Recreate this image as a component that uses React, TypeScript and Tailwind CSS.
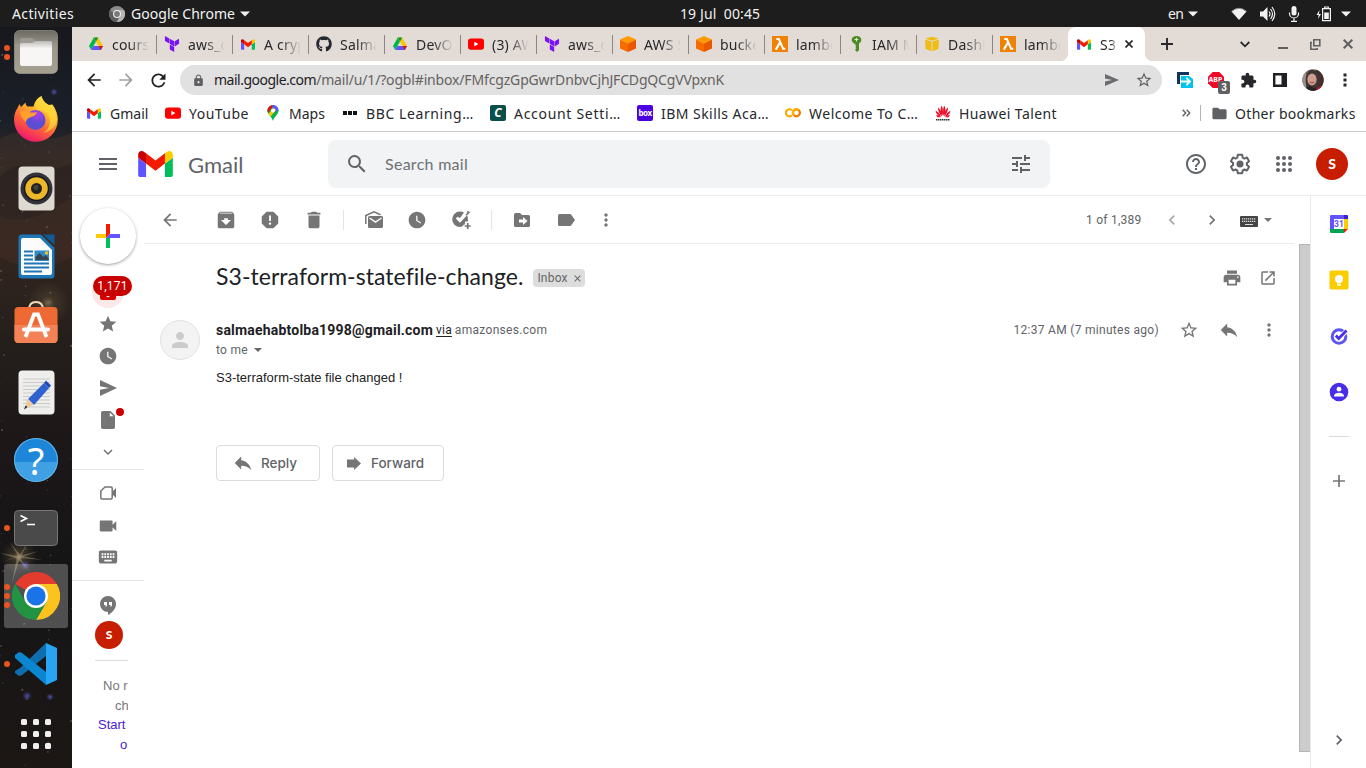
import React from "react";
import {
  MdArrowBack, MdArrowForward, MdRefresh, MdLock, MdStarBorder, MdExtension, MdMoreVert, MdFolder,
  MdMenu, MdSearch, MdTune, MdHelpOutline, MdArchive, MdReport, MdDelete,
  MdWatchLater, MdChevronLeft, MdChevronRight, MdKeyboard,
  MdPrint, MdOpenInNew, MdReply, MdStar, MdExpandMore, MdVideocam, MdClose, MdPerson,
} from "react-icons/md";
import { SiTerraform } from "react-icons/si";
import { FaGithub } from "react-icons/fa";

const UI = "font-['Noto_Sans',sans-serif]";

function T({ className = "", children }: { className?: string; children: React.ReactNode }) {
  return <span className={`inline-block whitespace-pre ${className}`}>{children}</span>;
}

function GmailMark({ w, h }: { w: number; h: number }) {
  return (
    <svg width={w} height={h} viewBox="52 42 88 66">
      <path fill="#6154ff" d="M58 108h14V74L52 59v43c0 3.32 2.69 6 6 6" />
      <path fill="#00bf5a" d="M120 108h14c3.32 0 6-2.69 6-6V59l-20 15" />
      <path fill="#fbcc00" d="M120 48v26l20-15v-8c0-7.42-8.47-11.65-14.4-7.2" />
      <path fill="#f21b00" d="M72 74V48l24 18 24-18v26L96 92" />
      <path fill="#c60000" d="M52 51v8l20 15V48l-5.6-4.2c-5.94-4.45-14.4-.22-14.4 7.2" />
    </svg>
  );
}

const DriveMark = () => (
  <svg width="16" height="16" viewBox="0 0 16 16">
    <path fill="#00b54b" d="M5.8 1.5 1 10l2.2 4L8 5.5z" />
    <path fill="#fbc800" d="M5.8 1.5h4.4L15 10h-4.4z" />
    <path fill="#6154ff" d="M5.4 10H15l-2.2 4H3.2z" />
    <path fill="#e3120b" d="M10.6 10H15l-2.2 4z" />
    <path fill="#0a8f3c" d="M5.8 1.5h4.4L8 5.5z" />
  </svg>
);
const YouTubeMark = () => (
  <svg width="16" height="16" viewBox="0 0 16 16"><rect y="2.4" width="16" height="11.4" rx="2.8" fill="#f00" /><path fill="#fff" d="M6.3 5.8v4.6L10.4 8.1z" /></svg>
);
const S3Mark = () => (
  <svg width="16" height="16" viewBox="0 0 16 16"><path fill="#ff9a00" d="m8 0 8 3.6L8 7.4 0 3.600z" /><path fill="#f66c00" d="M0 3.600 8 7.400V16l-8-3.600z" /><path fill="#e95700" d="m16 3.600-8 3.800V16l8-3.600z" /></svg>
);
const LambdaMark = () => (
  <svg width="16" height="16" viewBox="0 0 16 16"><rect width="16" height="16" fill="#ef8104" /><path fill="none" stroke="#fff" strokeWidth="2.100" d="M4.300 3h2.600l4.200 9.800h2.200M7.800 6.700 3.800 13.600" /></svg>
);
const IamMark = () => (
  <svg width="16" height="16" viewBox="0 0 16 16"><path fill="#4a8a22" d="M8.500 0c2.800 0 4.800 1.700 4.800 3.900 0 1.500-.9 2.700-2.300 3.400V14l-1.800 2-1.800-1.500V13l1-.8-1-1 1-1-1-.7V7.700h-1.400V7.300C5 6.600 3.700 5.300 3.700 3.900 3.700 1.700 5.700 0 8.500 0" /><path fill="#e3f2d5" d="M6.600 3h1.300V1.800h1.100V3h1.300v1.100H9v1.300H7.900V4.100H6.600z" /></svg>
);
const CubeMark = () => (
  <svg width="16" height="16" viewBox="0 0 16 16"><path fill="#f0bd14" d="m8 .8 6.800 1.900L8 4.700 1.200 2.700zM1 3.700l6.500 1.900V15.200L1.700 13zM15 3.700 8.500 5.600v9.600l5.800-2.200z" /></svg>
);

const tabs: { icon: React.ReactNode; label: string }[] = [
  { icon: <DriveMark />, label: "course" },
  { icon: <SiTerraform size={16} className="text-[#7b12f5]" />, label: "aws_cl" },
  { icon: <GmailMark w={14} h={11} />, label: "A crypto" },
  { icon: <FaGithub size={16} className="text-[#24292f]" />, label: "Salmae" },
  { icon: <DriveMark />, label: "DevOps" },
  { icon: <YouTubeMark />, label: "(3) AWS" },
  { icon: <SiTerraform size={16} className="text-[#7b12f5]" />, label: "aws_cl" },
  { icon: <S3Mark />, label: "AWS S3" },
  { icon: <S3Mark />, label: "bucket" },
  { icon: <LambdaMark />, label: "lambda" },
  { icon: <IamMark />, label: "IAM Ma" },
  { icon: <CubeMark />, label: "Dashbo" },
  { icon: <LambdaMark />, label: "lambda" },
];

const Caret = () => <svg width="10" height="6" viewBox="0 0 10 6"><path d="M0 .5h10L5 5.500z" fill="#f2f2f2" /></svg>;

function TopBar() {
  return (
    <div className={`flex h-[27px] shrink-0 items-center bg-[#1d1d1d] text-[14px] leading-[27px] text-[#f2f2f2] ${UI}`}>
      <div className="w-[109px] pl-3"><T className="tracking-[.37px]">Activities</T></div>
      <svg width="16" height="16" viewBox="0 0 16 16" className="mr-[6px]"><circle cx="8" cy="8" r="8" fill="#8c8c8c" /><path d="M8 8 1 4.500A8 8 0 0 0 7.500 16L11 9.800z" fill="#5e5e5e" /><path d="M8 4h7A8 8 0 0 1 8 16l3.500-6z" fill="#b5b5b5" /><circle cx="8" cy="8" r="4" fill="#eee" /><circle cx="8" cy="8" r="2.900" fill="#7a7a7a" /></svg>
      <div className="flex w-[549px] items-center gap-[5px]">
        <T className="tracking-[.05px]">Google Chrome</T>
        <Caret />
      </div>
      <div className="w-[488px] leading-[26px]"><T className="tracking-[.1px]">19 Jul  00:45</T></div>
      <div className="flex w-[62px] items-center gap-[5px]"><T className="tracking-[-.6px]">en</T><Caret /></div>
      <svg width="18" height="14" viewBox="0 0 18 14"><path d="M1.500 4.500Q9-2 16.500 4.500L9 13z" fill="#f2f2f2" /><path d="M1.500 4.500Q9-2 16.500 4.500" stroke="#8d8d8d" fill="none" /></svg>
      <svg width="18" height="16" viewBox="0 0 18 16" className="ml-[11px]"><path d="M1 5.500h3L8.500 1v14L4 10.500H1z" fill="#f2f2f2" /><path d="M10 5.500q2 2.500 0 5M11.500 3q4 5 0 10M13 1q5.500 7 0 14" stroke="#f2f2f2" strokeWidth="1.200" fill="none" /></svg>
      <svg width="12" height="16" viewBox="0 0 12 16" className="ml-[11px]"><rect x="3.500" y="0" width="5" height="9.500" rx="2.500" fill="#f2f2f2" /><path d="M1.500 6.500v1a4.500 4.500 0 0 0 9 0v-1M6 12v3M3 15.300h6" stroke="#f2f2f2" strokeWidth="1.200" fill="none" /></svg>
      <svg width="16" height="16" viewBox="0 0 16 16" className="ml-[16px]"><path d="M3.500 4 .5 9h2.200l-.7 4 3-5H2.900z" fill="#f2f2f2" /><path d="M6.600 2.600h7.800v12H6.600zM8.700 2.500V1h3.600v1.500" stroke="#f2f2f2" strokeWidth="1.200" fill="none" /><path d="M8.200 6.500h4.600V13H8.200z" fill="#f2f2f2" /></svg>
      <span className="ml-[9px]"><Caret /></span>
    </div>
  );
}

function Dots({ n }: { n: number }) {
  return (
    <div className="absolute top-0 bottom-0 left-[4px] flex flex-col items-center justify-center gap-[3px]">
      {Array.from({ length: n }).map((_, i) => <i key={i} className="size-[6px] rounded-full bg-[#e95420]" />)}
    </div>
  );
}

function DockItem({ dots = 0, active = false, children }: { dots?: number; active?: boolean; children: React.ReactNode }) {
  return (
    <div className="relative flex h-[68px] shrink-0 items-center justify-center">
      {active && <div className="absolute top-[2px] left-1 size-16 rounded-[3px] bg-white/25" />}
      {dots > 0 && <Dots n={dots} />}
      <div className="relative flex">{children}</div>
    </div>
  );
}

const stars = Array.from({ length: 150 }).map((_, i) => ({
  x: (i * 37.7 + (i % 7) * 11) % 72, y: (i * 91.3 + (i % 5) * 43) % 741, r: 0.4 + (i % 4) * 0.2, o: 0.15 + (i % 5) * 0.08,
}));

function Dock() {
  return (
    <div className="relative flex w-[72px] shrink-0 flex-col overflow-hidden bg-[#191a1d]">
      <svg className="absolute inset-0" width="72" height="741" viewBox="0 0 72 741">
        <defs>
          <linearGradient id="sky" x1="0" y1="0" x2="0" y2="1">
            <stop offset="0" stopColor="#17181d" /><stop offset=".13" stopColor="#1b2029" /><stop offset=".17" stopColor="#2c2423" />
            <stop offset=".3" stopColor="#33251f" /><stop offset=".42" stopColor="#251f1c" /><stop offset=".55" stopColor="#1d1718" />
            <stop offset=".75" stopColor="#151516" /><stop offset="1" stopColor="#1c1715" />
          </linearGradient>
          <radialGradient id="glow"><stop offset="0" stopColor="#c9b489" stopOpacity=".8" /><stop offset=".3" stopColor="#8c7850" stopOpacity=".35" /><stop offset="1" stopColor="#8c7850" stopOpacity="0" /></radialGradient>
          <radialGradient id="blue"><stop offset="0" stopColor="#6668c8" stopOpacity=".8" /><stop offset="1" stopColor="#3c3c9a" stopOpacity="0" /></radialGradient>
        </defs>
        <rect width="72" height="741" fill="url(#sky)" />
        <path d="M0 112q20-12 34-4t38-2v30q-22 10-40 4T0 150z" fill="#4a382e" opacity=".35" />
        <path d="M0 190q30 10 72-20v60q-40 20-72 0z" fill="#54382a" opacity=".25" />
        {stars.map((s, i) => <circle key={i} cx={s.x} cy={s.y} r={s.r} fill={i % 6 ? "#9a9290" : "#6a6cc0"} opacity={s.o} />)}
        <circle cx="48" cy="276" r="22" fill="url(#glow)" opacity=".6" />
        <circle cx="19" cy="530" r="18" fill="url(#glow)" opacity=".85" />
        <path d="M0 526l19 3 20-5-19 7L12 556l5-26L0 536l18-7-8-14 10 13 13-22-12 23 22 4-23-2 10 14-12-13z" fill="#d2bd96" opacity=".35" />
        <circle cx="27" cy="669" r="5" fill="url(#blue)" /><circle cx="50" cy="670" r="4" fill="url(#blue)" /><circle cx="54" cy="65" r="4" fill="url(#blue)" /><circle cx="25" cy="538" r="5" fill="url(#blue)" />
      </svg>
      <div className="relative -mt-[9px] flex flex-col">
        <DockItem dots={2}>
          <svg width="44" height="44" viewBox="0 0 44 44"><defs><linearGradient id="fg" x1="0" y1="0" x2="0" y2="1"><stop offset="0" stopColor="#6b6961" /><stop offset=".35" stopColor="#9b978a" /><stop offset="1" stopColor="#a5a08f" /></linearGradient><linearGradient id="ff" x1="0" y1="0" x2="0" y2="1"><stop offset="0" stopColor="#bcbab7" /><stop offset=".3" stopColor="#f7f6f5" /></linearGradient></defs><rect x=".5" y=".5" width="43" height="43" rx="5" fill="url(#fg)" stroke="#b5b1a3" strokeOpacity=".5" /><path d="M6 10q0-2 2-2h9q2 0 3 1.500t3 1.500h13q2 0 2 2v4H6z" fill="#9c9a93" /><path d="M6 15q0-2 2-2h9q2 0 3-1t3-1h13q2 0 2 2v21q0 2-2 2H8q-2 0-2-2z" fill="url(#ff)" /></svg>
        </DockItem>
        <DockItem>
          <svg width="46" height="48" viewBox="0 0 46 48" className="-mt-[3px]"><defs><linearGradient id="fx" x1=".8" y1="0" x2=".3" y2="1"><stop offset="0" stopColor="#fff44f" /><stop offset=".35" stopColor="#ffb52b" /><stop offset=".6" stopColor="#ff6a35" /><stop offset="1" stopColor="#f0136f" /></linearGradient><radialGradient id="fp" cx=".6" cy=".2"><stop offset="0" stopColor="#b43be8" /><stop offset="1" stopColor="#5a4fd0" /></radialGradient></defs><path d="M28.500 1q1 5 7 9l4-.5q5 7 5.300 15A21.800 22 0 0 1 1 25q0-7 3.500-12l2-4 1.500 3 4.500-4.500q0 3 2 4l6 0Q22 4 28.500 1" fill="url(#fx)" /><circle cx="22.500" cy="25" r="10" fill="url(#fp)" /><path d="M7 17q6-3 9 0 4 1 8 0-1 4-6 5-5 2-5 5-5-4-6-10" fill="#ffa02c" /><path d="M24 15q12 0 13 11 0 8-7 12 12-3 14-13Q42 14 36 10q-8-3-7.500-9-8 5-4.500 14" fill="#ffd83b" opacity=".75" /></svg>
        </DockItem>
        <DockItem>
          <svg width="37" height="45" viewBox="0 0 37 45"><rect x=".5" y=".5" width="36" height="44" rx="4" fill="#dedad0" /><circle cx="18.500" cy="22.500" r="16" fill="#32323a" /><circle cx="18.500" cy="22.500" r="12" fill="#edb72a" stroke="#17171c" strokeWidth="1.500" /><circle cx="18.500" cy="22.500" r="5.500" fill="#222" /><circle cx="18" cy="21.500" r="2.500" fill="#444" /></svg>
        </DockItem>
        <DockItem>
          <svg width="37" height="45" viewBox="0 0 37 45"><path d="M4 .5h19L36.500 14v27q0 3.500-3.500 3.500H4q-3.500 0-3.500-3.500V4Q.5.5 4 .5" fill="#1d77b5" /><path d="M25 .5h11.500V11z" fill="#115a94" /><path d="M5 4h17l12 12v23q0 2-2 2H5q-2 0-2-2V6q0-2 2-2" fill="#fbfbfb" /><path d="M6 17.500h9M6 21.500h9M6 25.500h9M6 29.500h25M6 33.500h25M6 37.500h18" stroke="#1d77b5" strokeWidth="1.800" /><path d="M16.500 16.500H31V27H16.500z" fill="#2c8bc9" /><path d="M17.500 26v-3l4-4 4 4 2-2 3 3v2z" fill="#38454f" /><circle cx="28.500" cy="19" r="1.800" fill="#f2c12e" /></svg>
        </DockItem>
        <DockItem>
          <svg width="44" height="44" viewBox="0 0 44 44" className="-mt-1"><path d="M15 10q0-8 7-8t7 8" fill="none" stroke="#f3d9b3" strokeWidth="2" /><rect x=".5" y="7" width="43" height="36" rx="4" fill="#ee6a35" /><path d="M.5 25h43v14q0 4-4 4h-35q-4 0-4-4z" fill="#f38356" /><path d="M11.500 37 20 14.500h4L32.500 37" fill="none" stroke="#fff" strokeWidth="3.800" /><path d="M10 29.500h24" stroke="#fff" strokeWidth="4" strokeLinecap="round" /></svg>
        </DockItem>
        <DockItem>
          <svg width="37" height="45" viewBox="0 0 37 45"><rect x=".5" y=".5" width="36" height="44" rx="4" fill="#eeeeec" /><path d="M5 9h27M5 12.500h27M5 16h27M5 19.500h27M5 23h27M5 26.500h27M5 30h27M5 33.500h27M5 37h27" stroke="#c9c9c9" /><path d="m26 13 5 5-15 17-6-6z" fill="#2f62d0" /><path d="m28 10.500 5 5-2 2.500-5-5z" fill="#1f4bb0" /><path d="m9.500 28.500 6 6-9 5z" fill="#eec99e" /><path d="m7.700 35.500 1.800 1.500-3.500 2.500z" fill="#222" /></svg>
        </DockItem>
        <DockItem>
          <div className="flex size-11 items-center justify-center rounded-full bg-[linear-gradient(#1d86d8_55%,#3fa0e4_55%)] font-['Noto_Sans',sans-serif] text-[38px] leading-none text-white ring-1 ring-[#64b1e6] ring-inset">?</div>
        </DockItem>
        <DockItem dots={1}>
          <svg width="44" height="36" viewBox="0 0 44 36"><rect x=".5" y=".5" width="43" height="35" rx="4" fill="#4a4a4a" stroke="#777" /><path d="m6.500 5.500 6 3-6 3M13 14.500h8" stroke="#fff" strokeWidth="1.600" fill="none" /></svg>
        </DockItem>
        <DockItem dots={3} active>
          <svg width="48" height="48" viewBox="0 0 48 48"><path d="M24 24 3.200 12A24 24 0 0 1 44.800 12z" fill="#e33b2e" /><path d="M24 12h20.800A24 24 0 0 1 24 48l10.400-18z" fill="#fcc31e" /><path d="M3.200 12A24 24 0 0 0 24 48l10.400-18H13.600z" fill="#229342" /><circle cx="24" cy="24" r="12" fill="#fff" /><circle cx="24" cy="24" r="9.600" fill="#1a73e8" /></svg>
        </DockItem>
        <DockItem dots={1}>
          <svg width="42" height="42" viewBox="0 0 42 42"><path d="M31 0 5 25l-5 3 0 2 4 3 3-1L31 13z" fill="#0f6ead" /><path d="M4 9 0 12v3l31 27V29L7 10z" fill="#0b86d0" /><path d="M31 0 42 5v32l-11 5z" fill="#27a5f2" /></svg>
        </DockItem>
        <DockItem>
          <div className="mt-[3px] grid grid-cols-3 gap-[6px]">
            {Array.from({ length: 9 }).map((_, i) => <i key={i} className="size-[6px] rounded-[1.5px] bg-[#efefef]" />)}
          </div>
        </DockItem>
      </div>
    </div>
  );
}

function TabStrip() {
  return (
    <div className={`flex h-[34px] shrink-0 bg-[#e3dbd6] pl-2 text-[14px] tracking-[.2px] text-[#26282b] ${UI}`}>
      {tabs.map((t, i) => (
        <div key={i} className="relative flex w-[76px] shrink-0 items-center pl-2">
          {i > 0 && <i className="absolute top-2 left-0 h-[19px] w-px bg-[#8b8785]" />}
          <span className="flex w-4 shrink-0 items-center justify-center">{t.icon}</span>
          <span className="ml-2 w-[37px] overflow-hidden whitespace-nowrap [mask-image:linear-gradient(90deg,#000_45%,transparent)]">{t.label}</span>
        </div>
      ))}
      <div className="relative flex w-[77px] shrink-0 items-center rounded-t-lg bg-white pl-2">
        <i className="absolute bottom-0 -left-2 size-2 bg-[radial-gradient(circle_at_0_0,transparent_8px,white_8.5px)]" />
        <i className="absolute -right-2 bottom-0 size-2 bg-[radial-gradient(circle_at_100%_0,transparent_8px,white_8.5px)]" />
        <span className="flex w-4 justify-center"><GmailMark w={14} h={11} /></span>
        <span className="ml-2 w-[17px] overflow-hidden whitespace-nowrap [mask-image:linear-gradient(90deg,#000_65%,transparent)]">S3-te</span>
        <svg width="8" height="8" viewBox="0 0 8 8" className="ml-[8px]"><path d="m.5.5 7 7m0-7-7 7" stroke="#26282b" strokeWidth="1.700" /></svg>
      </div>
      <div className="flex flex-1 items-center">
        <svg width="12" height="12" viewBox="0 0 12 12" className="ml-4"><path d="M6 0v12M0 6h12" stroke="#26282b" strokeWidth="1.900" /></svg>
        <svg width="10" height="7" viewBox="0 0 10 7" className="ml-[67px]"><path d="m.7 1 4.300 4.300L9.300 1" stroke="#26282b" strokeWidth="1.800" fill="none" /></svg>
        <svg width="10" height="10" viewBox="0 0 10 10" className="ml-[28px]"><path d="M0 9h10" stroke="#5f6063" strokeWidth="2" /></svg>
        <svg width="11" height="11" viewBox="0 0 11 11" className="ml-[22px]"><path d="M3.800.8h6v6h-6zM2 3.500H.8v6.700h6.400V9" stroke="#5f6063" strokeWidth="1.600" fill="none" /></svg>
        <svg width="10" height="10" viewBox="0 0 10 10" className="ml-[22px]"><path d="m.7.7 8.600 8.600m0-8.600L.7 9.300" stroke="#5f6063" strokeWidth="2" /></svg>
      </div>
    </div>
  );
}

function AddressBar() {
  return (
    <div className={`flex h-[37px] shrink-0 items-center pt-px text-[14px] ${UI}`}>
      <MdArrowBack size={20} className="ml-3 text-[#1f2023]" />
      <MdArrowForward size={20} className="ml-3 text-[#a1a1a1]" />
      <MdRefresh size={21} className="ml-3 text-[#1f2023]" />
      <div className="ml-[11px] flex h-[30px] w-[982px] items-center rounded-full bg-[#e1e1e1] pl-3">
        <MdLock size={13} className="text-[#5f6063]" />
        <div className="ml-[9px] w-[891px] pb-[2px] whitespace-nowrap">
          <T className="tracking-[-.5px] text-[#1f2023]">mail.google.com</T><T className="tracking-[-.16px] text-[#66625f]">/mail/u/1/?ogbl#inbox/FMfcgzGpGwrDnbvCjhJFCDgQCgVVpxnK</T>
        </div>
        <svg width="14" height="12" viewBox="0 0 14 12"><path d="M0 0 14 6 0 12V7.500L7 6 0 4.500z" fill="#6a6b6e" /></svg>
        <MdStarBorder size={18} className="ml-[16px] text-[#5f6063]" />
      </div>
      <svg width="16" height="16" viewBox="0 0 16 16" className="ml-[15px]"><path d="M0 0h12v3H3v9H0z" fill="#16325f" /><path d="M4 4h8l4 3v9H4z" fill="#00c4ee" /><path d="M3.500 9.500h9M9.500 6l3.500 3.500L9.500 13" stroke="#fff" strokeWidth="1.800" fill="none" /></svg>
      <div className="relative ml-[15px] size-4">
        <svg width="16" height="16" viewBox="0 0 16 16"><path d="M4.700 0h6.600L16 4.700v6.600L11.300 16H4.700L0 11.300V4.700z" fill="#ee0a27" /></svg>
        <span className="absolute top-[4px] left-[.5px] text-[7px] leading-[8px] font-bold text-white">ABP</span>
        <span className="absolute top-[9px] left-[10px] flex h-[13px] w-3 items-center justify-center rounded-[2px] bg-[#5f6063] font-['Liberation_Sans',sans-serif] text-[10px] font-bold text-white">3</span>
      </div>
      <MdExtension size={17} className="ml-4 text-[#26282b]" />
      <svg width="14" height="14" viewBox="0 0 14 14" className="ml-[16px]"><path d="M1.200 1.200h11.600v11.600H1.200z" fill="none" stroke="#1f2023" strokeWidth="2.400" /><path d="M8.500 0H14v14H8.500z" fill="#1f2023" /></svg>
      <svg width="22" height="22" viewBox="0 0 22 22" className="ml-[15px]"><defs><clipPath id="pc"><circle cx="11" cy="11" r="10.700" /></clipPath></defs><g clipPath="url(#pc)"><rect width="22" height="22" fill="#7b6258" /><path d="M14 0h8v22h-8z" fill="#4b2c2a" /><path d="M0 0h4v22H0z" fill="#9a8f8a" /><path d="M11 1q7 1 6.500 10T13 22H6Q2 12 4.500 6T11 1" fill="#3d3838" /><ellipse cx="10" cy="10.500" rx="4.600" ry="6" fill="#cf9f8d" /><path d="M7.500 13q2.500 2 5 0" stroke="#a3474b" fill="none" /><path d="M3 22q1-5 5-5l4 2 6-1 3 4z" fill="#2a2325" /><path d="M14 19l5-2 2 5h-6z" fill="#b6142c" /></g></svg>
      <svg width="4" height="14" viewBox="0 0 4 14" className="ml-[19px]"><path d="M.5.500h3v3h-3zM.5 5.500h3v3h-3zM.5 10.500h3v3h-3z" fill="#26282b" /></svg>
    </div>
  );
}

function Bookmarks() {
  return (
    <div className={`flex h-[34px] shrink-0 items-center border-b border-[#c8c8c8] pb-[3px] pl-[14px] text-[14px] text-[#26282b] ${UI}`}>
      <div className="flex w-[79px] items-center gap-2"><span className="flex w-4 justify-center"><GmailMark w={14} h={11} /></span><T>Gmail</T></div>
      <div className="flex w-[100px] items-center gap-2"><YouTubeMark /><T className="tracking-[.48px]">YouTube</T></div>
      <div className="flex w-[77px] items-center gap-2">
        <svg width="16" height="16" viewBox="0 0 16 16"><defs><clipPath id="pin"><path d="M8 0a5.600 5.600 0 0 1 5.600 5.600C13.600 9.500 9.500 11 8 16 6.500 11 2.400 9.500 2.400 5.600A5.600 5.600 0 0 1 8 0" /></clipPath></defs><g clipPath="url(#pin)"><rect width="16" height="16" fill="#00b54b" /><path d="M0 0h9L2 9H0z" fill="#e3120b" /><path d="M7 0h9v3L9 8z" fill="#6154ff" /><path d="m2 10 7-7 2 2-6.500 8z" fill="#fbc800" /></g><circle cx="8" cy="5.600" r="2" fill="#fff" /></svg>
        <T>Maps</T>
      </div>
      <div className="flex w-[148px] items-center gap-2"><svg width="16" height="16" viewBox="0 0 16 16"><path d="M1 6h4v4H1zM6 6h4v4H6zM11 6h4v4h-4z" fill="#111" /></svg><T className="tracking-[.6px]">BBC Learning…</T></div>
      <div className="flex w-[147px] items-center gap-2"><span className="flex size-4 items-center justify-center rounded-[2px] bg-[#0b4f4a] text-[12px] font-bold text-white italic">C</span><T className="tracking-[.7px]">Account Setti…</T></div>
      <div className="flex w-[148px] items-center gap-2"><span className="flex size-4 items-center justify-center rounded-[2px] bg-[#4a00e0] pb-px text-[8px] font-bold tracking-[-.5px] text-white">box</span><T className="tracking-[.46px]">IBM Skills Aca…</T></div>
      <div className="flex w-[150px] items-center gap-2"><svg width="16" height="16" viewBox="0 0 16 16" fill="none" strokeWidth="2.200"><path d="M6.800 5.200a3.500 3.500 0 1 0 0 5.200" stroke="#f8ab00" /><circle cx="11.400" cy="7.800" r="3.500" stroke="#ee7a00" /><path d="M8.900 10.300a3.500 3.500 0 0 1 5-5" stroke="#fbb400" /></svg><T className="tracking-[.5px]">Welcome To C…</T></div>
      <div className="flex w-[245px] items-center gap-2">
        <svg width="16" height="16" viewBox="0 0 16 16"><path fill="#e8102c" d="M7.700 11Q4 5 6.800.5 8.500 4 7.700 11M8.300 11Q12 5 9.200.5 7.500 4 8.300 11M7 11.400Q3 8 3 2.500 6.500 5 7 11.400M9 11.400Q13 8 13 2.500 9.500 5 9 11.400M6.200 11.800Q1 10 .5 5.500 4.500 7.500 6.200 11.800M9.800 11.800Q15 10 15.500 5.500 11.500 7.500 9.800 11.800M5.800 12.300H2.300L1 10q3 0 4.800 2.300M10.200 12.300h3.500L15 10q-3 0-4.800 2.300" /><path d="M1 14.700h14" stroke="#333" strokeWidth="1.600" strokeDasharray="1.500 .5" /></svg>
        <T className="tracking-[.4px]">Huawei Talent</T>
      </div>
      <svg width="9" height="8" viewBox="0 0 9 8" className="ml-[2px]"><path d="m.7.7 3 3.300-3 3.300M4.700.7l3 3.300-3 3.300" stroke="#5f6063" strokeWidth="1.400" fill="none" /></svg>
      <i className="ml-[9px] h-4 w-px bg-[#b5b5b5]" />
      <MdFolder size={17} className="mr-[7px] ml-[10px] text-[#5f6063]" />
      <T className="tracking-[.32px]">Other bookmarks</T>
    </div>
  );
}

function Header() {
  return (
    <div className="flex h-16 shrink-0 items-center border-b border-[#ebebeb]">
      <MdMenu size={24} className="ml-6 text-[#5f6368]" />
      <div className="ml-[18px] flex w-[190px] items-center">
        <GmailMark w={35} h={26} />
        <T className="ml-[15px] pt-px font-['Lato',sans-serif] text-[22px] text-[#5f6368]">Gmail</T>
      </div>
      <div className="flex h-12 w-[722px] items-center rounded-lg bg-[#f1f3f4]">
        <MdSearch size={24} className="ml-[17px] text-[#5f6368]" />
        <T className="ml-4 w-[624px] font-['Lato',sans-serif] text-[16px] tracking-[.28px] text-[#6c7075]">Search mail</T>
        <MdTune size={24} className="text-[#5f6368]" />
      </div>
      <MdHelpOutline size={24} className="ml-[134px] text-[#5f6368]" />
      <svg width="24" height="24" viewBox="0 0 24 24" className="ml-5 text-[#5f6368]"><path fill="currentColor" d="M13.850 22.250h-3.700c-.74 0-1.360-.54-1.450-1.270l-.27-1.890c-.27-.14-.53-.29-.79-.46l-1.800.72c-.7.26-1.470-.03-1.810-.65L2.200 15.530c-.35-.66-.2-1.440.36-1.880l1.530-1.190c-.01-.15-.02-.3-.02-.46 0-.15.010-.31.020-.46l-1.520-1.190c-.59-.45-.74-1.260-.37-1.880l1.850-3.190c.34-.62 1.110-.9 1.790-.63l1.810.73c.26-.17.52-.32.78-.46l.27-1.910c.09-.7.71-1.250 1.440-1.250h3.700c.74 0 1.360.54 1.450 1.270l.27 1.890c.27.14.53.29.79.46l1.800-.72c.71-.26 1.480.03 1.820.65l1.840 3.180c.36.66.2 1.440-.36 1.880l-1.520 1.190c.01.15.02.3.02.46s-.01.31-.02.46l1.520 1.190c.56.45.72 1.230.37 1.860l-1.860 3.220c-.34.62-1.110.9-1.800.63l-1.800-.72c-.26.17-.52.32-.78.46l-.27 1.910c-.1.680-.72 1.220-1.460 1.220zm-3.230-2h2.760l.37-2.550.53-.22c.44-.18.88-.44 1.340-.78l.45-.34 2.380.96 1.380-2.400-2.030-1.580.07-.56c.03-.26.06-.51.06-.78s-.03-.53-.06-.78l-.07-.56 2.030-1.580-1.390-2.400-2.390.96-.45-.35c-.42-.32-.87-.58-1.330-.77l-.52-.22-.37-2.550h-2.760l-.37 2.550-.53.21c-.44.19-.88.44-1.340.79l-.45.33-2.380-.95-1.390 2.390 2.030 1.580-.07.56a7 7 0 0 0-.06.79c0 .26.020.53.060.78l.07.56-2.030 1.580 1.380 2.400 2.390-.96.45.35c.43.33.86.58 1.330.77l.53.22z" /><circle cx="12" cy="12" r="3.500" fill="currentColor" /></svg>
      <svg width="16" height="16" viewBox="0 0 16 16" className="ml-6" fill="#5f6368">{[2, 8, 14].map((y) => [2, 8, 14].map((x) => <circle key={`${x}-${y}`} cx={x} cy={y} r="2" />))}</svg>
      <div className="ml-6 flex size-8 items-center justify-center rounded-full bg-[#c71d00] font-['Lato',sans-serif] text-[14px] font-black text-white">S</div>
    </div>
  );
}

function NavCell({ children }: { children: React.ReactNode }) {
  return <div className="relative flex h-8 shrink-0 items-center justify-center">{children}</div>;
}

function SideNav() {
  return (
    <div className="flex w-[72px] shrink-0 flex-col text-[#757575]">
      <div className="mt-3 mb-3 ml-2 flex size-14 shrink-0 items-center justify-center rounded-full bg-white shadow-[0_1px_2px_0_rgba(60,64,67,.3),0_1px_3px_1px_rgba(60,64,67,.15)]">
        <svg width="24" height="24" viewBox="0 0 24 24"><path d="M10 0h4v10l-4 4z" fill="#f21b00" /><path d="M0 10h10v4H0z" fill="#fbcc00" /><path d="M14 10h10v4H10z" fill="#6154ff" /><path d="M10 14h4v10h-4z" fill="#00bf5a" /></svg>
      </div>
      <NavCell>
        <i className="size-8 rounded-full bg-[#fce8e6]" />
        <span className="absolute top-[16px] flex h-2 w-4 justify-center rounded-b-[2px] bg-[#d50000]" />
        <span className="absolute top-0 left-[21px] flex h-5 w-[39px] items-center justify-center rounded-full bg-[#c80000] font-['Roboto',sans-serif] text-[12px] tracking-[.2px] text-white">1,171</span>
        <svg className="absolute top-[20px]" width="4" height="2" viewBox="0 0 4 2"><path d="M0 0h4L2 1.500z" fill="#fff" /></svg>
      </NavCell>
      <NavCell><MdStar size={20} /></NavCell>
      <NavCell><MdWatchLater size={20} /></NavCell>
      <NavCell><svg width="17" height="16" viewBox="0 0 17 16"><path d="M0 0 17 8 0 16V9.800L9 8 0 6.200z" fill="currentColor" /></svg></NavCell>
      <NavCell>
        <svg width="14" height="18" viewBox="0 0 14 18"><path d="M2 0h7.500L14 4.500V16q0 2-2 2H2q-2 0-2-2V2q0-2 2-2" fill="currentColor" /><path d="M8.800 1.500V5.300h3.800z" fill="#fff" /></svg>
        <i className="absolute top-1 left-11 size-2 rounded-full bg-[#c80000]" />
      </NavCell>
      <NavCell><MdExpandMore size={18} /></NavCell>
      <div className="mt-px h-px shrink-0 bg-[#e4e4e4]" />
      <div className="my-[7px] flex flex-col">
        <NavCell><svg width="17" height="14" viewBox="0 0 17 14"><path d="M5 1h6q1.200 0 1.200 1.200v9.600Q12.200 13 11 13H2Q.8 13 .8 11.800V5z" fill="none" stroke="currentColor" strokeWidth="1.500" /><path d="M12 6l4-4v10l-4-4z" fill="currentColor" /></svg></NavCell>
        <NavCell><MdVideocam size={22} className="mt-px" /></NavCell>
        <NavCell><MdKeyboard size={22} /></NavCell>
      </div>
      <div className="h-px shrink-0 bg-[#e4e4e4]" />
      <svg width="16" height="19" viewBox="0 0 16 19" className="mt-[15px] ml-7 shrink-0"><path d="M8 0a8 8 0 0 1 8 8c0 4.800-4 9-8 11v-3A8 8 0 0 1 8 0" fill="currentColor" /><path d="M4 6h3v3q0 1.500-1.500 2V9H4zM9 6h3v3q0 1.500-1.500 2V9H9z" fill="#fff" /></svg>
      <div className="mt-[6px] ml-[23px] flex size-7 shrink-0 items-center justify-center rounded-full bg-[#c71d00] font-['Lato',sans-serif] text-[12px] font-black text-white">S</div>
      <div className="mt-[11px] ml-[23px] w-[33px] overflow-hidden border-t border-[#dadce0] pt-[15px] font-['Liberation_Sans',sans-serif] text-[13px] leading-[19.5px] whitespace-nowrap">
        <div className="pl-[8px] text-[#777]">No recent</div>
        <div className="pl-[20px] text-[#777]">chats</div>
        <div className="pl-[3px] text-[#4b1bd0]">Start a new</div>
        <div className="pl-[25px] text-[#4b1bd0]">one</div>
      </div>
    </div>
  );
}

function Cell({ children }: { children: React.ReactNode }) {
  return <div className="flex w-11 shrink-0 justify-center">{children}</div>;
}

function MailToolbar() {
  return (
    <div className="mr-4 flex h-12 shrink-0 items-center border-b border-[#ebebeb] text-[#757575]">
      <div className="flex w-[60px] pl-4"><MdArrowBack size={20} /></div>
      <Cell><MdArchive size={22} /></Cell>
      <Cell><MdReport size={22} /></Cell>
      <Cell><MdDelete size={22} /></Cell>
      <i className="mx-[7px] h-5 w-px bg-[#e4e4e4]" />
      <Cell><svg width="18" height="17" viewBox="0 0 18 17" className="ml-px"><path d="M.8 13V4.500L9 .8l6.500 3" fill="none" stroke="currentColor" strokeWidth="1.500" /><path d="M4 5h12.500Q18 5 18 6.500v9q0 1.500-1.500 1.500h-12Q3 17 3 15.500v-9Q3 5 4.500 5" fill="currentColor" /><path d="m4.500 7 6 4 6-4" fill="none" stroke="#fff" strokeWidth="1.500" /></svg></Cell>
      <Cell><MdWatchLater size={20} /></Cell>
      <Cell><svg width="19" height="18" viewBox="0 0 19 18" className="ml-px"><path d="M8 .5a8 8 0 0 1 4 1.100L8 7 5.500 5.800 3.800 7.500 8 11.800l7-7.500q.9 1.500.9 4.200v2h-3v3h-1q-1.700 2.500-4 2.500a7.700 7.700 0 0 1 .1-15.500" fill="currentColor" /><path d="m15 .8 2 .5-3 3" stroke="currentColor" fill="none" strokeWidth="1.500" /><path d="M15.700 12v6M12.700 15h6" stroke="currentColor" strokeWidth="1.700" /></svg></Cell>
      <i className="mx-2 h-5 w-px bg-[#e4e4e4]" />
      <Cell><svg width="16" height="14" viewBox="0 0 16 14" className="mt-px"><path d="M1.500 0H6l2 2h6.500Q16 2 16 3.500v9q0 1.500-1.500 1.500h-13Q0 14 0 12.500v-11Q0 0 1.500 0" fill="currentColor" /><path d="M5 6.500h4V4l4.500 4L9 12V9.500H5z" fill="#fff" /></svg></Cell>
      <Cell><svg width="17" height="12" viewBox="0 0 17 12"><path d="M1.500 0H12q.8 0 1.300.7L17 6l-3.700 5.300q-.5.700-1.300.7H1.500Q0 12 0 10.500v-9Q0 0 1.500 0" fill="currentColor" /></svg></Cell>
      <div className="ml-[8px]"><MdMoreVert size={20} /></div>
      <T className="ml-[470px] w-[76px] font-['Roboto',sans-serif] text-[12px] tracking-[.25px] text-[#5f6368]">1 of 1,389</T>
      <MdChevronLeft size={20} className="text-[#a8a8a8]" />
      <MdChevronRight size={20} className="ml-5" />
      <svg width="18" height="11" viewBox="0 0 18 11" className="mt-[3px] ml-[18px]"><rect width="18" height="11" rx="1" fill="#444" /><path d="M2 2.800h14M2 5.300h14" stroke="#ddd" strokeWidth="1.300" strokeDasharray="1.300 .7" /><path d="M5 8.500h8" stroke="#ddd" /></svg>
      <svg width="8" height="4" viewBox="0 0 8 4" className="ml-[6px]"><path d="M0 0h8L4 4z" fill="#757575" /></svg>
    </div>
  );
}

function Message() {
  return (
    <div className="flex min-h-0 flex-1">
      <div className="flex flex-1 flex-col pr-[22px] pl-4 text-[#757575]">
        <div className="mt-[14px] flex h-10 items-center pl-14">
          <T className="pb-[3px] font-['Lato',sans-serif] text-[23px] tracking-[.05px] text-[#202124]">S3-terraform-statefile-change.</T>
          <div className="ml-[10px] flex h-[18px] w-[52px] items-center rounded bg-[#ddd] pl-1 text-[#666]">
            <T className="font-['Roboto',sans-serif] text-[12px] tracking-[.2px]">Inbox</T>
            <MdClose size={11} className="ml-1" />
          </div>
          <span className="flex-1" />
          <MdPrint size={20} />
          <MdOpenInNew size={18} className="ml-[17px]" />
        </div>
        <div className="mt-[22px] flex">
          <div className="flex size-10 items-center justify-center rounded-full border border-[#e0e0e0] bg-[#f3f3f3]"><MdPerson size={24} className="text-[#cbcbcb]" /></div>
          <div className="ml-4 flex flex-1 flex-col font-['Roboto',sans-serif]">
            <div className="flex h-5 items-center">
              <T className="text-[14px] font-bold tracking-[.2px] text-[#202124]">salmaehabtolba1998@gmail.com</T>
              <T className="ml-[3px] text-[12px] tracking-[.2px] text-[#222] underline underline-offset-2">via</T>
              <T className="ml-[3px] text-[12px] tracking-[.3px] text-[#5f6368]">amazonses.com</T>
              <span className="flex-1" />
              <T className="mr-[20px] text-[12px] tracking-[.3px] text-[#5f6368]">12:37 AM (7 minutes ago)</T>
              <MdStarBorder size={20} />
              <MdReply size={22} className="ml-[19px]" />
              <MdMoreVert size={20} className="mr-[-2px] ml-[19px]" />
            </div>
            <div className="flex h-5 items-center"><T className="text-[12px] tracking-[.25px] text-[#5f6368]">to me</T><svg width="8" height="4" viewBox="0 0 8 4" className="ml-[6px]"><path d="M0 0h8L4 4z" fill="#666" /></svg></div>
            <T className="mt-2 font-['Liberation_Sans',sans-serif] text-[13px] leading-5 text-[#222]">S3-terraform-state file changed !</T>
            <div className="mt-[57px] flex gap-3 font-['Inter',sans-serif] text-[13.5px] font-medium text-[#5f6368]">
              <div className="flex h-9 w-[104px] items-center rounded border border-[#dadce0] pl-[15px]"><MdReply size={22} className="text-[#757575]" /><T className="ml-[7px]">Reply</T></div>
              <div className="flex h-9 w-[112px] items-center rounded border border-[#dadce0] pl-[14px]"><svg width="14" height="13" viewBox="0 0 14 13"><path d="M0 2.500h7V0l7 6.500L7 13v-2.500H0z" fill="#757575" /></svg><T className="ml-[10px]">Forward</T></div>
            </div>
          </div>
        </div>
      </div>
      <div className="mb-4 w-[11px] border-y border-l border-[#b4b4b4] bg-[#ccc]" />
    </div>
  );
}

function SidePanel() {
  return (
    <div className="flex w-14 shrink-0 flex-col items-center border-l border-[#ebebeb] pl-px">
      <svg width="20" height="20" viewBox="0 0 20 20" className="mt-[18px]"><path d="M2 1h13v4H5v10H1V2q0-1 1-1" fill="#6154ff" /><path d="M15 1h3q1 0 1 1v3h-4z" fill="#3d1be0" /><path d="M15 5h4v10h-4z" fill="#fbcc00" /><path d="M1 15h14v4H2q-1 0-1-1z" fill="#00a54f" /><path d="M15 15h4l-4 4z" fill="#f21b00" /><path d="M5 5h10v10H5z" fill="#fff" /><text x="10" y="13.200" textAnchor="middle" fontSize="8.500" fontWeight="bold" fontFamily="Roboto" fill="#6154ff">31</text></svg>
      <svg width="20" height="20" viewBox="0 0 20 20" className="mt-9"><rect x=".5" y=".5" width="19" height="19" rx="2" fill="#fbcc00" /><circle cx="10" cy="9" r="4" fill="#fff" /><path d="M8 11h4v2.500H8zM8 14.300h4v1.500H8z" fill="#fff" /></svg>
      <svg width="20" height="20" viewBox="0 0 20 20" className="mt-9"><circle cx="10" cy="10.500" r="6.800" fill="none" stroke="#5b55f6" strokeWidth="3" /><path d="m6.500 9.500 3 3L18 4.500" fill="none" stroke="#fff" strokeWidth="4.500" /><path d="m6.800 9.500 2.900 3 7.800-8" fill="none" stroke="#4a2de8" strokeWidth="2.800" /></svg>
      <svg width="20" height="20" viewBox="0 0 20 20" className="mt-9"><circle cx="10" cy="10" r="9.300" fill="#4a2de8" /><circle cx="10" cy="7.200" r="2.400" fill="#fff" /><path d="M5 14.500v-1q1-2.800 5-2.800t5 2.800v1z" fill="#fff" /></svg>
      <i className="mt-[34px] h-px w-5 shrink-0 bg-[#dadada]" />
      <svg width="12" height="12" viewBox="0 0 12 12" className="mt-[38px]"><path d="M6 0v12M0 6h12" stroke="#757575" strokeWidth="1.700" /></svg>
      <span className="flex-1" />
      <MdChevronRight size={20} className="mr-px mb-[18px] text-[#5f6368]" />
    </div>
  );
}

export default function App() {
  return (
    <div className="flex h-[768px] w-[1366px] flex-col overflow-hidden bg-white">
      <TopBar />
      <div className="flex min-h-0 flex-1">
        <Dock />
        <div className="flex min-w-0 flex-1 flex-col">
          <TabStrip />
          <AddressBar />
          <Bookmarks />
          <Header />
          <div className="flex min-h-0 flex-1">
            <SideNav />
            <div className="flex min-w-0 flex-1 flex-col">
              <MailToolbar />
              <Message />
            </div>
            <SidePanel />
          </div>
        </div>
      </div>
    </div>
  );
}
